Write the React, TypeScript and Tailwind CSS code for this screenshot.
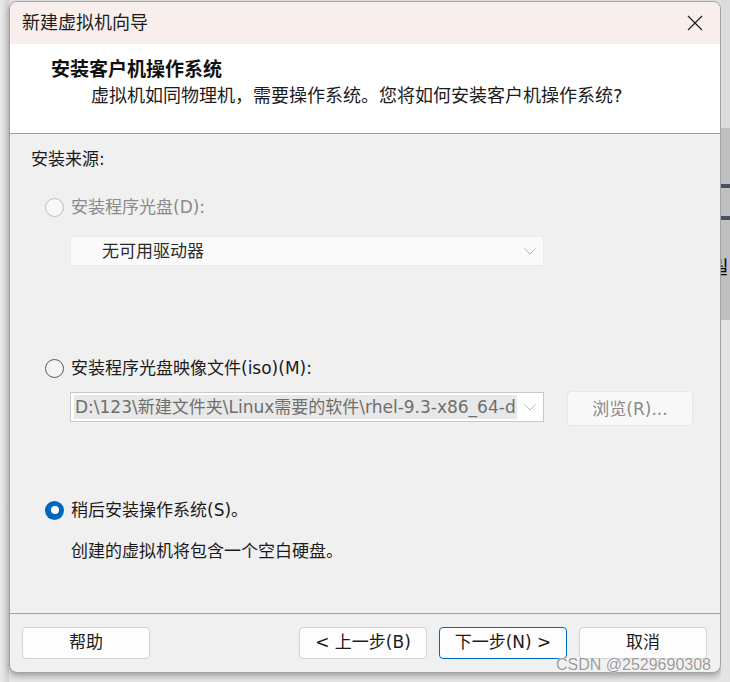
import React from 'react';

const sans = { fontFamily: '"DejaVu Sans", "Noto Sans CJK SC", sans-serif' };

const Radio: React.FC<{ state: 'disabled' | 'off' | 'on' }> = ({ state }) => {
  if (state === 'on') {
    return (
      <span className="w-[19px] h-[19px] rounded-full bg-[#0067c0] flex items-center justify-center shrink-0">
        <span className="w-[8px] h-[8px] rounded-full bg-white" />
      </span>
    );
  }
  return (
    <span
      className={
        state === 'disabled'
          ? 'w-[19px] h-[19px] rounded-full border border-[#bdbdbd] bg-[#f7f7f7] shrink-0'
          : 'w-[19px] h-[19px] rounded-full border border-[#5c5c5c] bg-[#f3f3f3] shrink-0'
      }
    />
  );
};

const Chevron: React.FC = () => (
  <svg width="12" height="7" viewBox="0 0 12 7" fill="none" className="shrink-0">
    <path d="M0.5 0.5 L6 6 L11.5 0.5" stroke="#b4b4b4" strokeWidth="1" />
  </svg>
);

const FooterButton: React.FC<{ label: string; primary?: boolean }> = ({ label, primary }) => (
  <div
    className={
      primary
        ? 'w-[128px] h-[32px] rounded-[4px] border border-[#0067c0] bg-[#fdfdfd] flex items-center justify-center text-[17px] text-[#1b1b1b]'
        : 'w-[128px] h-[32px] rounded-[4px] border border-[#d3d3d3] bg-[#fdfdfd] flex items-center justify-center text-[17px] text-[#1b1b1b]'
    }
  >
    {label}
  </div>
);

const App: React.FC = () => {
  return (
    <div className="w-[730px] h-[682px] bg-[#e5e5e5] flex overflow-hidden relative" style={sans}>
      <div className="w-[9px] shrink-0 bg-gradient-to-r from-[#ebebeb] to-[#d2d2d2]" />

      <div className="w-[712px] h-[672px] mt-[1px] shrink-0 rounded-[8px] border border-[#a2a2a2] bg-[#f0f0f0] flex flex-col overflow-hidden shadow-[0_3px_6px_rgba(0,0,0,0.3)]">
        {/* title bar */}
        <div className="h-[42px] shrink-0 bg-[#f8efed] flex items-center justify-between pl-[12px] pr-[17px]">
          <span className="text-[18px] leading-[24px] text-[#1b1b1b]">新建虚拟机向导</span>
          <svg width="16" height="16" viewBox="0 0 16 16" fill="none">
            <path d="M1 1 L15 15 M15 1 L1 15" stroke="#1b1b1b" strokeWidth="1.2" />
          </svg>
        </div>

        {/* header */}
        <div className="h-[90px] shrink-0 bg-white border-b border-[#a0a0a0] pt-[13px] pl-[41px]">
          <div className="text-[19px] leading-[24px] font-bold text-[#111]">安装客户机操作系统</div>
          <div className="mt-[3px] ml-[40px] text-[18px] leading-[24px] text-[#1b1b1b]">
            虚拟机如同物理机，需要操作系统。您将如何安装客户机操作系统?
          </div>
        </div>

        {/* body */}
        <div className="h-[480px] shrink-0 border-b border-[#a0a0a0] pt-[13px] text-[17px] leading-[24px]">
          <div className="pl-[21px] text-[#1b1b1b]">安装来源:</div>

          <div className="mt-[24px] ml-[35px] flex items-center gap-[7px]">
            <Radio state="disabled" />
            <span className="text-[#8a8a8a]">安装程序光盘(D):</span>
          </div>
          <div className="mt-[17px] ml-[60px] w-[474px] h-[30px] bg-[#fafafa] border border-[#ebebeb] flex items-center justify-between pl-[31px] pr-[7px]">
            <span className="text-[#2b2b2b]">无可用驱动器</span>
            <Chevron />
          </div>

          <div className="mt-[90px] ml-[35px] flex items-center gap-[7px]">
            <Radio state="off" />
            <span className="text-[#1b1b1b]">安装程序光盘映像文件(iso)(M):</span>
          </div>
          <div className="mt-[11px] ml-[60px] flex items-start gap-[23px]">
            <div className="mt-[1px] w-[474px] h-[30px] bg-white border border-[#c9c9c9] flex items-center justify-between pl-[3px] pr-[7px]">
              <span className="bg-[#e8e8e8] text-[#6e6e6e] px-[1px] whitespace-nowrap overflow-hidden w-[443px]">
                D:\123\新建文件夹\Linux需要的软件\rhel-9.3-x86_64-d
              </span>
              <Chevron />
            </div>
            <div className="w-[126px] h-[35px] rounded-[4px] bg-[#f8f8f8] border border-[#e6e6e6] flex items-center justify-center text-[#8a8a8a]">
              浏览(R)...
            </div>
          </div>

          <div className="mt-[72px] ml-[35px] flex items-center gap-[7px]">
            <Radio state="on" />
            <span className="text-[#1b1b1b]">稍后安装操作系统(S)。</span>
          </div>
          <div className="mt-[17px] ml-[61px] text-[#1b1b1b]">创建的虚拟机将包含一个空白硬盘。</div>
        </div>

        {/* footer */}
        <div className="flex-1 flex items-start justify-between pt-[13px] pl-[12px] pr-[13px]">
          <FooterButton label="帮助" />
          <div className="flex gap-[12px]">
            <FooterButton label="< 上一步(B)" />
            <FooterButton label="下一步(N) >" primary />
            <FooterButton label="取消" />
          </div>
        </div>
      </div>

      {/* window behind, right edge */}
      <div className="flex-1 flex flex-col">
        <div className="h-[128px] bg-[#dcdcdc]" />
        <div className="h-[192px] bg-[#bfbfbf] flex flex-col overflow-hidden">
          <div className="h-[56px]" />
          <div className="h-[4px] bg-[#46515c]" />
          <div className="h-[28px]" />
          <div className="h-[4px] bg-[#46515c]" />
          <div className="h-[34px]" />
          <span
            className="text-[18px] leading-[24px] text-black ml-[-9px] whitespace-nowrap"
            style={{ fontFamily: '"Noto Sans CJK KR", sans-serif' }}
          >
            릴
          </span>
        </div>
        <div className="flex-1 bg-[#e4e4e4]" />
      </div>

      <span
        className="absolute left-[556px] top-[655px] text-[16px] leading-[20px] text-[#9a9a9a] whitespace-nowrap"
        style={{ fontFamily: '"Liberation Sans", sans-serif', textShadow: '0 0 2px #fff, 0 0 1px #fff' }}
      >
        CSDN @2529690308
      </span>
    </div>
  );
};

export default App;
